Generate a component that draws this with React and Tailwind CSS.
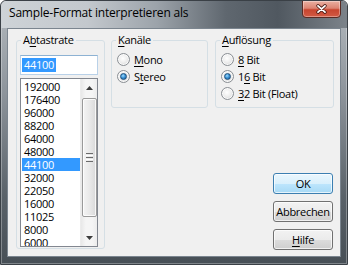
import React from "react";

const U = ({ children }) => (
  <span className="underline underline-offset-[2px] decoration-[1px]">{children}</span>
);

function Radio({ checked, children }) {
  return (
    <div className="flex items-center h-[17px]">
      <span className="w-[13px] h-[13px] rounded-full border border-[#8a8f94] bg-[radial-gradient(circle_at_45%_40%,#ffffff_0%,#eeeeee_45%,#c9cbcd_100%)] shadow-[inset_0_0_0_1px_rgba(255,255,255,0.8)] flex items-center justify-center shrink-0">
        {checked && (
          <span className="w-[7px] h-[7px] rounded-full border border-[#1d4f7c] bg-[radial-gradient(circle_at_40%_35%,#9fdcff_0%,#3d94d6_45%,#165a92_100%)]" />
        )}
      </span>
      <span className="ml-[4px] leading-[13px]">{children}</span>
    </div>
  );
}

function Btn({ children, def }) {
  return (
    <div
      className={
        def
          ? "w-[60px] h-[21px] rounded-[3px] border border-[#3c7fb1] bg-[linear-gradient(to_bottom,#eaf6fd_0%,#d9f0fc_50%,#bee6fd_50%,#a7d9f5_100%)] shadow-[inset_0_0_0_1px_rgba(255,255,255,0.7)] flex items-center justify-center leading-[13px]"
          : "w-[60px] h-[21px] rounded-[3px] border border-[#707070] bg-[linear-gradient(to_bottom,#f2f2f2_0%,#ebebeb_50%,#dddddd_50%,#cfcfcf_100%)] shadow-[inset_0_0_0_1px_rgba(255,255,255,0.7)] flex items-center justify-center leading-[13px]"
      }
    >
      {children}
    </div>
  );
}

const rates = [
  "192000",
  "176400",
  "96000",
  "88200",
  "64000",
  "48000",
  "44100",
  "32000",
  "22050",
  "16000",
  "11025",
  "8000",
  "6000",
];

export default function App() {
  return (
    <div className="w-[348px] h-[265px] rounded-t-[6px] border border-[#3a4046] bg-[linear-gradient(to_bottom,#b4babf_0%,#8d949b_35%,#596168_75%,#474f56_100%)] shadow-[inset_0_0_0_1px_rgba(255,255,255,0.3)] flex flex-col overflow-hidden text-[11px] text-black tracking-[-0.3px] [font-family:'Open_Sans',sans-serif]">
      {/* title bar */}
      <div className="h-[27px] shrink-0 flex items-start rounded-t-[5px] bg-[linear-gradient(to_right,#ced3d7_0%,#c3c8cd_25%,#9ca3aa_45%,#5f676f_65%,#505860_80%,#7c838a_100%)]">
        <span className="ml-[8px] mt-[4px] text-[12px] leading-[16px] tracking-[-0.2px]">
          Sample-Format interpretieren als
        </span>
        <div className="ml-auto mr-[6px] -mt-[1px] w-[39px] h-[18px] rounded-b-[4px] border border-[#5a2a23] bg-[linear-gradient(to_bottom,#eab0a2_0%,#dc8472_45%,#c8452f_55%,#d25a44_100%)] shadow-[inset_0_0_0_1px_rgba(255,255,255,0.35)] flex items-center justify-center">
          <svg width="11" height="10" viewBox="0 0 11 10">
            <path d="M2 1.8 L9 8.2 M9 1.8 L2 8.2" stroke="#4a1b14" strokeWidth="3.4" strokeLinecap="round" />
            <path d="M2 1.8 L9 8.2 M9 1.8 L2 8.2" stroke="#ffffff" strokeWidth="1.8" strokeLinecap="round" />
          </svg>
        </div>
      </div>

      {/* client */}
      <div className="mx-[6px] mb-[7px] flex-1 border border-[#7b858f] bg-[#f0f0f0] flex items-start pl-[8px] pt-[11px]">
        {/* Abtastrate */}
        <div className="relative w-[89px] h-[209px] border border-[#d5dfe5] rounded-[3px] pl-[3px] pt-[14px] flex flex-col">
          <span className="absolute left-[4px] top-[-8px] px-[2px] bg-[#f0f0f0] leading-[13px]">
            A<U>b</U>tastrate
          </span>
          <div className="w-[78px] h-[20px] border border-[#b9d1e8] border-t-[#8db2d3] bg-white flex items-center pl-[1px]">
            <span className="bg-[#3399ff] text-white px-[2px] leading-[14px]">44100</span>
          </div>
          <div className="mt-[3px] w-[78px] h-[169px] border border-[#828790] bg-white flex overflow-hidden">
            <div className="flex-1 pt-[1px] pl-[1px] overflow-hidden">
              {rates.map((r) => (
                <div
                  key={r}
                  className={
                    r === "44100"
                      ? "h-[13px] leading-[13px] pl-[2px] bg-[#3399ff] text-white"
                      : "h-[13px] leading-[13px] pl-[2px]"
                  }
                >
                  {r}
                </div>
              ))}
            </div>
            {/* scrollbar */}
            <div className="w-[17px] h-full bg-[linear-gradient(to_right,#e8e8e8_0%,#f5f5f5_30%,#f5f5f5_70%,#ececec_100%)] border-l border-[#ececec] flex flex-col items-center">
              <div className="h-[17px] w-full flex items-center justify-center">
                <svg width="7" height="4" viewBox="0 0 7 4">
                  <path d="M3.5 0 L7 4 L0 4 Z" fill="#3c3c3c" />
                </svg>
              </div>
              <div className="mt-[2px] w-[15px] h-[119px] rounded-[2px] border border-[#9a9a9a] bg-[linear-gradient(to_right,#f4f4f4_0%,#e9e9e9_50%,#d9d9d9_100%)] shadow-[inset_0_0_0_1px_rgba(255,255,255,0.8)] flex flex-col items-center justify-center gap-[1px]">
                <div className="w-[7px] h-[1px] bg-[#6b6b6b]" />
                <div className="w-[7px] h-[1px] bg-[#ffffff]" />
                <div className="w-[7px] h-[1px] bg-[#6b6b6b]" />
                <div className="w-[7px] h-[1px] bg-[#ffffff]" />
                <div className="w-[7px] h-[1px] bg-[#6b6b6b]" />
              </div>
              <div className="flex-1" />
              <div className="h-[17px] w-full flex items-center justify-center">
                <svg width="7" height="4" viewBox="0 0 7 4">
                  <path d="M0 0 L7 0 L3.5 4 Z" fill="#3c3c3c" />
                </svg>
              </div>
            </div>
          </div>
        </div>

        {/* right column */}
        <div className="ml-[6px] flex flex-col">
          <div className="flex gap-[7px]">
            <div className="relative w-[97px] h-[68px] border border-[#d5dfe5] rounded-[3px] pl-[5px] pt-[10px]">
              <span className="absolute left-[4px] top-[-8px] px-[2px] bg-[#f0f0f0] leading-[13px]">
                <U>K</U>anäle
              </span>
              <Radio>
                <U>M</U>ono
              </Radio>
              <Radio checked>
                S<U>t</U>ereo
              </Radio>
            </div>
            <div className="relative w-[119px] h-[68px] border border-[#d5dfe5] rounded-[3px] pl-[5px] pt-[10px]">
              <span className="absolute left-[4px] top-[-8px] px-[2px] bg-[#f0f0f0] leading-[13px]">
                <U>A</U>uflösung
              </span>
              <Radio>
                <U>8</U> Bit
              </Radio>
              <Radio checked>
                1<U>6</U> Bit
              </Radio>
              <Radio>
                <U>3</U>2 Bit (Float)
              </Radio>
            </div>
          </div>
          <div className="self-end mr-[1px] mt-[65px] flex flex-col gap-[7px]">
            <Btn def>OK</Btn>
            <Btn>Abbrechen</Btn>
            <Btn>
              <U>H</U>ilfe
            </Btn>
          </div>
        </div>
      </div>
    </div>
  );
}
